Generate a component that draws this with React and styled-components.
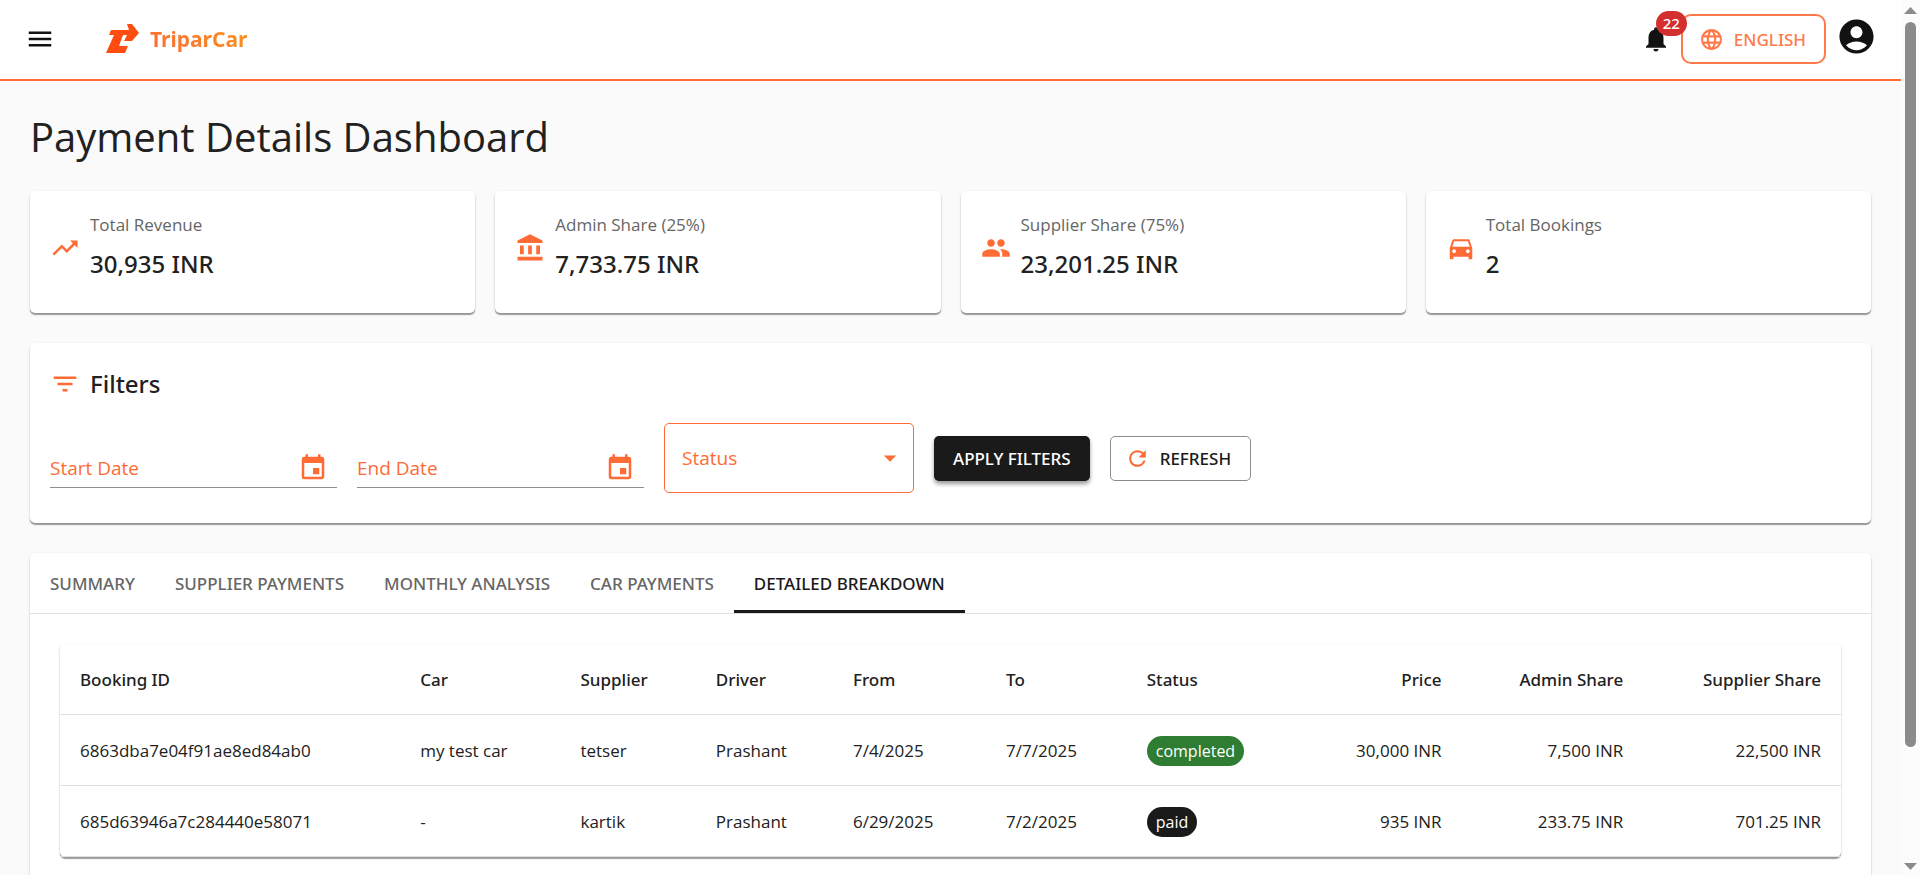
import React, { useState } from "react";
import styled, { createGlobalStyle } from "styled-components";
import {
  MdMenu,
  MdNotifications,
  MdLanguage,
  MdAccountCircle,
  MdTrendingUp,
  MdAccountBalance,
  MdPeople,
  MdDirectionsCar,
  MdFilterList,
  MdEvent,
  MdRefresh,
  MdArrowDropDown,
} from "react-icons/md";

const mediumFont = `"Segoe UI", "Noto Sans", sans-serif`;

const stats = [
  { label: "Total Revenue", value: "30,935 INR", Icon: MdTrendingUp },
  { label: "Admin Share (25%)", value: "7,733.75 INR", Icon: MdAccountBalance },
  { label: "Supplier Share (75%)", value: "23,201.25 INR", Icon: MdPeople },
  { label: "Total Bookings", value: "2", Icon: MdDirectionsCar },
];

const tabs = [
  "Summary",
  "Supplier Payments",
  "Monthly Analysis",
  "Car Payments",
  "Detailed Breakdown",
];

const columns = [
  { key: "id", label: "Booking ID", width: "19.1%" },
  { key: "car", label: "Car", width: "9%" },
  { key: "supplier", label: "Supplier", width: "7.6%" },
  { key: "driver", label: "Driver", width: "7.7%" },
  { key: "from", label: "From", width: "8.6%" },
  { key: "to", label: "To", width: "7.9%" },
  { key: "status", label: "Status", width: "10.7%" },
  { key: "price", label: "Price", width: "8.1%", right: true },
  { key: "adminShare", label: "Admin Share", width: "10.2%", right: true },
  { key: "supplierShare", label: "Supplier Share", width: "11.1%", right: true },
];

const bookings = [
  {
    id: "6863dba7e04f91ae8ed84ab0",
    car: "my test car",
    supplier: "tetser",
    driver: "Prashant",
    from: "7/4/2025",
    to: "7/7/2025",
    status: "completed",
    price: "30,000 INR",
    adminShare: "7,500 INR",
    supplierShare: "22,500 INR",
  },
  {
    id: "685d63946a7c284440e58071",
    car: "-",
    supplier: "kartik",
    driver: "Prashant",
    from: "6/29/2025",
    to: "7/2/2025",
    status: "paid",
    price: "935 INR",
    adminShare: "233.75 INR",
    supplierShare: "701.25 INR",
  },
];

function DateField({ id, label }) {
  return (
    <DateWrap>
      <DateInput id={id} type="text" placeholder={label} aria-label={label} />
      <IconButton type="button" aria-label={`Choose ${label}`}>
        <MdEvent size={30} />
      </IconButton>
    </DateWrap>
  );
}

export default function App() {
  const [activeTab, setActiveTab] = useState("Detailed Breakdown");

  return (
    <>
      <GlobalStyle />
      <Shell>
        <Page>
          <Header>
            <MenuButton type="button" aria-label="Menu">
              <MdMenu size={30} />
            </MenuButton>
            <Brand href="#">
              <svg width="34" height="30" viewBox="0 0 34 30" aria-hidden="true">
                <path
                  fill="#ff4d12"
                  d="M5 6H23L21 0H26L33 9L26 17H18L21 11H17L13 22H22L19 29H0L8 11H3Z"
                />
              </svg>
              <BrandName>TriparCar</BrandName>
            </Brand>
            <Spacer />
            <BellButton type="button" aria-label="Notifications">
              <MdNotifications size={30} />
              <Badge>22</Badge>
            </BellButton>
            <LanguageButton type="button">
              <MdLanguage size={25} />
              English
            </LanguageButton>
            <AccountButton type="button" aria-label="Account">
              <MdAccountCircle size={41} />
            </AccountButton>
          </Header>

          <Content>
            <Title>Payment Details Dashboard</Title>

            <Stats>
              {stats.map(({ label, value, Icon }) => (
                <StatCard key={label}>
                  <Icon size={30} />
                  <div>
                    <StatLabel>{label}</StatLabel>
                    <StatValue>{value}</StatValue>
                  </div>
                </StatCard>
              ))}
            </Stats>

            <Filters>
              <FiltersHead>
                <MdFilterList size={30} />
                <h2>Filters</h2>
              </FiltersHead>
              <FilterRow>
                <DateField id="start" label="Start Date" />
                <DateField id="end" label="End Date" />
                <SelectWrap>
                  <select aria-label="Status" defaultValue="">
                    <option value="">Status</option>
                    <option value="completed">completed</option>
                    <option value="paid">paid</option>
                  </select>
                  <MdArrowDropDown size={30} />
                </SelectWrap>
                <ApplyButton type="button">Apply Filters</ApplyButton>
                <RefreshButton type="button">
                  <MdRefresh size={25} />
                  Refresh
                </RefreshButton>
              </FilterRow>
            </Filters>

            <Paper>
              <TabList role="tablist">
                {tabs.map((tab) => (
                  <Tab
                    key={tab}
                    type="button"
                    role="tab"
                    aria-selected={tab === activeTab}
                    $active={tab === activeTab}
                    onClick={() => setActiveTab(tab)}
                  >
                    {tab}
                  </Tab>
                ))}
              </TabList>
              <TabPanel>
                <Paper>
                  <Table>
                    <thead>
                      <tr>
                        {columns.map((col) => (
                          <Th key={col.key} $width={col.width} $right={col.right}>
                            {col.label}
                          </Th>
                        ))}
                      </tr>
                    </thead>
                    <tbody>
                      {bookings.map((booking) => (
                        <tr key={booking.id}>
                          {columns.map((col) => (
                            <Td key={col.key} $right={col.right}>
                              {col.key === "status" ? (
                                <Chip $status={booking.status}>{booking.status}</Chip>
                              ) : (
                                booking[col.key]
                              )}
                            </Td>
                          ))}
                        </tr>
                      ))}
                    </tbody>
                  </Table>
                </Paper>
              </TabPanel>
            </Paper>
          </Content>
        </Page>

        <ScrollTrack aria-hidden="true">
          <Arrow />
          <ThumbArea>
            <Thumb />
          </ThumbArea>
          <Arrow $down />
        </ScrollTrack>
      </Shell>
    </>
  );
}

const GlobalStyle = createGlobalStyle`
  * {
    box-sizing: border-box;
  }
  body {
    margin: 0;
    background: #fafafa;
    color: #212121;
    font-family: "Segoe UI", "Open Sans", sans-serif;
    font-size: 17px;
  }
  h1, h2, p {
    margin: 0;
  }
  button, input, select {
    font: inherit;
    color: inherit;
  }
  button {
    padding: 0;
    border: 0;
    background: none;
    cursor: pointer;
  }
  svg {
    display: block;
    flex: none;
  }
`;

const Shell = styled.div`
  display: grid;
  grid-template-columns: minmax(0, 1fr) 19px;
  height: 100vh;
  overflow: hidden;
`;

const Page = styled.div`
  overflow: hidden;
`;

const Header = styled.header`
  display: flex;
  align-items: center;
  height: 81px;
  padding: 0 24px 1px 25px;
  background: #fff;
  border-bottom: 2px solid #ff6b35;
`;

const MenuButton = styled.button`
  color: #121212;
`;

const Brand = styled.a`
  display: flex;
  align-items: center;
  gap: 10px;
  margin-left: 51px;
  text-decoration: none;
`;

const BrandName = styled.span`
  font-family: ${mediumFont};
  font-size: 21px;
  font-weight: 700;
  line-height: 30px;
  color: transparent;
  background: linear-gradient(45deg, #ff6b35, #f7931e);
  background-clip: text;
`;

const Spacer = styled.div`
  flex: 1;
`;

const BellButton = styled.button`
  position: relative;
  margin-right: 10px;
  color: #121212;
`;

const Badge = styled.span`
  position: absolute;
  top: -13px;
  left: 15px;
  z-index: 1;
  width: 31px;
  height: 25px;
  border-radius: 13px;
  background: #d32f2f;
  color: #fff;
  font-family: ${mediumFont};
  font-size: 15px;
  font-weight: 500;
  line-height: 25px;
`;

const LanguageButton = styled.button`
  display: flex;
  align-items: center;
  gap: 10px;
  height: 50px;
  padding: 0 18px 0 16px;
  border: 2px solid #ff7a4a;
  border-radius: 10px;
  color: #ff7a4a;
  font-family: ${mediumFont};
  font-weight: 500;
  text-transform: uppercase;
`;

const AccountButton = styled.button`
  margin-left: 10px;
  padding-bottom: 6px;
  color: #121212;
`;

const Content = styled.main`
  padding: 29px 30px 30px;
`;

const Title = styled.h1`
  margin-bottom: 28px;
  font-size: 40px;
  font-weight: 400;
  line-height: 53px;
`;

const Paper = styled.section`
  background: #fff;
  border-radius: 5px;
  box-shadow: 0 2px 1px rgba(0, 0, 0, 0.35), 0 1px 3px rgba(0, 0, 0, 0.12);
`;

const Stats = styled.div`
  display: grid;
  grid-template-columns: repeat(4, 1fr);
  gap: 20px;
  margin-bottom: 30px;
`;

const StatCard = styled(Paper)`
  display: flex;
  align-items: center;
  gap: 10px;
  padding: 20px 20px 28px;

  > svg {
    color: #ff6b35;
  }
`;

const StatLabel = styled.p`
  margin-bottom: 5px;
  color: #666;
  line-height: 27px;
`;

const StatValue = styled.p`
  font-family: ${mediumFont};
  font-size: 24px;
  font-weight: 500;
  line-height: 42px;
`;

const Filters = styled(Paper)`
  margin-bottom: 30px;
  padding: 20px 20px 30px;
`;

const FiltersHead = styled.div`
  display: flex;
  align-items: center;
  gap: 10px;
  margin-bottom: 18px;

  svg {
    color: #ff6b35;
  }
  h2 {
    font-family: ${mediumFont};
    font-size: 24px;
    font-weight: 500;
    line-height: 42px;
  }
`;

const FilterRow = styled.div`
  display: flex;
  flex-wrap: wrap;
  align-items: center;
  gap: 20px;
`;

const DateWrap = styled.div`
  display: flex;
  align-items: center;
  width: 287px;
  height: 60px;
  padding: 20px 9px 0 0;
  border-bottom: 1px solid #8f8f8f;
`;

const DateInput = styled.input`
  flex: 1;
  min-width: 0;
  padding: 0;
  border: 0;
  outline: 0;
  background: none;
  font-size: 19px;

  &::placeholder {
    color: #ff6b35;
    opacity: 1;
  }
`;

const IconButton = styled.button`
  color: #ff6b35;
`;

const SelectWrap = styled.div`
  display: grid;
  align-items: center;
  width: 250px;
  height: 70px;
  color: #ff6b35;

  select, svg {
    grid-area: 1 / 1;
  }
  select {
    height: 100%;
    padding: 0 17px;
    border: 1px solid #ff6b35;
    border-radius: 5px;
    background: none;
    appearance: none;
    font-size: 19px;
  }
  svg {
    justify-self: end;
    margin-right: 9px;
    pointer-events: none;
  }
`;

const ApplyButton = styled.button`
  height: 45px;
  padding: 0 19px;
  border-radius: 5px;
  background: #1a1a1a;
  box-shadow: 0 3px 4px rgba(0, 0, 0, 0.4);
  color: #fff;
  font-family: ${mediumFont};
  font-weight: 500;
  text-transform: uppercase;
`;

const RefreshButton = styled.button`
  display: flex;
  align-items: center;
  gap: 10px;
  height: 45px;
  padding: 0 19px 0 14px;
  border: 1px solid #8c8c8c;
  border-radius: 5px;
  color: #1a1a1a;
  font-family: ${mediumFont};
  font-weight: 500;
  text-transform: uppercase;

  svg {
    color: #ff6b35;
  }
`;

const TabList = styled.div`
  display: flex;
  border-bottom: 1px solid #e0e0e0;
`;

const Tab = styled.button`
  height: 60px;
  padding: 3px 20px 0;
  border-bottom: 3px solid ${(props) => (props.$active ? "#1a1a1a" : "transparent")};
  color: ${(props) => (props.$active ? "#1a1a1a" : "#666")};
  font-family: ${mediumFont};
  font-weight: 500;
  text-transform: uppercase;
`;

const TabPanel = styled.div`
  padding: 30px;
`;

const Table = styled.table`
  width: 100%;
  table-layout: fixed;
  border-spacing: 0;
  line-height: 30px;
`;

const Th = styled.th`
  width: ${(props) => props.$width};
  padding: 21px 20px 19px;
  border-bottom: 1px solid #e0e0e0;
  font-family: ${mediumFont};
  font-weight: 500;
  text-align: ${(props) => (props.$right ? "right" : "left")};
  white-space: nowrap;
`;

const Td = styled.td`
  padding: 21px 20px 19px;
  border-bottom: 1px solid #e0e0e0;
  text-align: ${(props) => (props.$right ? "right" : "left")};
  white-space: nowrap;
`;

const Chip = styled.span`
  display: block;
  width: fit-content;
  padding: 0 9px;
  border-radius: 15px;
  background: ${(props) => (props.$status === "completed" ? "#2e7d32" : "#1a1a1a")};
  color: #fff;
  font-size: 16px;
`;

const ScrollTrack = styled.div`
  display: flex;
  flex-direction: column;
  align-items: center;
  gap: 8px;
  padding: 7px 0 5px;
  background: #fcfcfc;
`;

const ThumbArea = styled.div`
  flex: 1;
`;

const Thumb = styled.div`
  width: 11px;
  height: 87%;
  border-radius: 6px;
  background: #8b8b8b;
`;

const Arrow = styled.div`
  width: 13px;
  height: 7px;
  background: #8b8b8b;
  clip-path: ${(props) =>
    props.$down ? "polygon(0 0, 100% 0, 50% 100%)" : "polygon(50% 0, 100% 100%, 0 100%)"};
`;
